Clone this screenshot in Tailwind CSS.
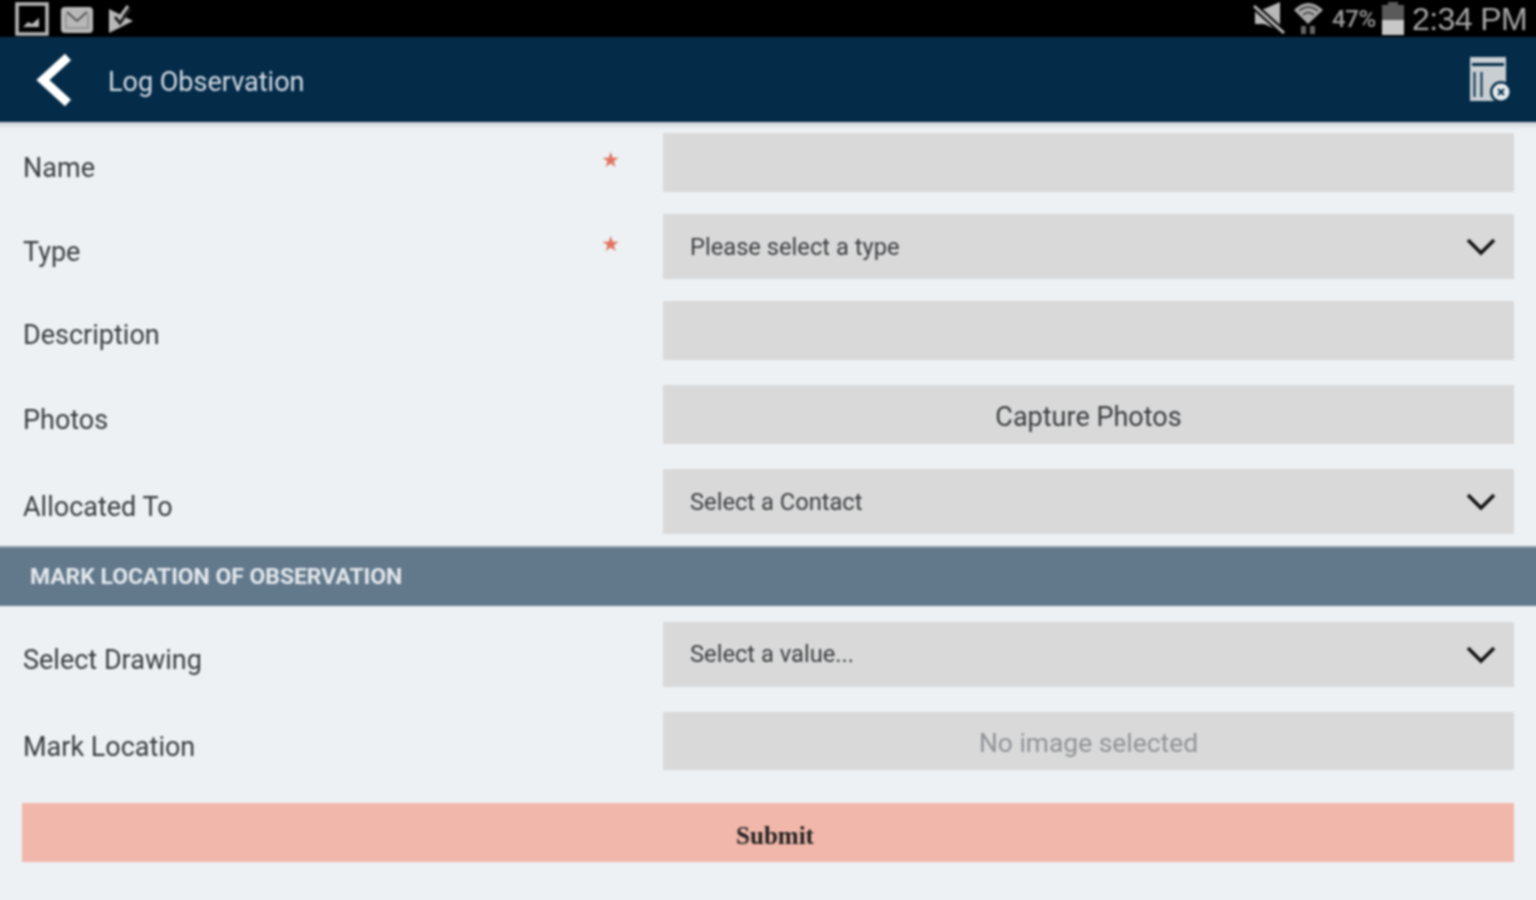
<!DOCTYPE html>
<html>
<head>
    <title>Log Observation</title>
    <script src="https://cdn.jsdelivr.net/npm/@tailwindcss/browser@4"></script>
</head>
<body class="bg-[#edf1f4] font-['Roboto',sans-serif] text-[#3a3d3f] overflow-hidden">
<!--wrapper hangs 8px past the window so the blur doesn't fade the edges-->
<div class="w-[1552px] h-[916px] -ml-[8px] -mt-[8px] bg-[#edf1f4] blur-[0.8px]">

    <!--status bar-->
    <div class="h-[45px] pt-[8px] pl-[8px] pr-[8px] bg-black flex items-center justify-between text-[#a8a8a8]">
        <div class="flex items-center">
            <svg class="ml-[15px]" width="34" height="37" viewBox="0 0 34 37" fill="none">
                <rect x="2" y="4" width="30" height="30" stroke="#b8b8b8" stroke-width="3.500"/>
                <path d="M8 27 L13 22 L17 24 L24 18 V27 Z" fill="#b8b8b8"/>
            </svg>
            <svg class="ml-[11px]" width="34" height="37" viewBox="0 0 34 37" fill="none">
                <rect x="1" y="7" width="32" height="26" rx="4" fill="#b8b8b8"/>
                <path d="M7 12 L17 21 L27 12" stroke="#555" stroke-width="2"/>
                <path d="M6 14 V28 H28 V14" stroke="#8a8a8a" stroke-width="1.500"/>
            </svg>
            <svg class="ml-[13px]" width="30" height="37" viewBox="0 0 30 37" fill="none">
                <path d="M2 9 L26 21 L2 33 Z" fill="#b8b8b8"/>
                <path d="M8 17 L13 23 L23 9" stroke="#222" stroke-width="3"/>
                <path d="M13 17 L21 6" stroke="#b8b8b8" stroke-width="3"/>
            </svg>
        </div>
        <div class="flex items-center">
            <svg width="38" height="37" viewBox="0 0 38 37" fill="none">
                <path d="M4 9 H13 L29 2 V31 L13 24 H4 Z" fill="#b8b8b8"/>
                <path d="M3 6 L33 33" stroke="#000" stroke-width="7"/>
                <path d="M3 6 L33 33" stroke="#b8b8b8" stroke-width="3"/>
            </svg>
            <svg class="ml-[3px]" width="34" height="37" viewBox="0 0 34 37" fill="none">
                <path d="M2 10 Q16 -4 31 10 L16 24 Z" fill="#a8a8a8"/>
                <path d="M7 11 Q16 3 26 11 M11 15 Q16 10 22 15" stroke="#333" stroke-width="1.500"/>
                <path d="M9 26 H14 V34 H9 Z M18 26 H23 V34 H18 Z" fill="#666"/>
            </svg>
            <span class="ml-[6px] w-[50px] text-[24px] font-medium tracking-[-0.4px] text-[#999]">47%</span>
            <div class="w-[22px] h-[33px] flex flex-col items-center">
                <div class="w-[10px] h-[3px] bg-[#5a5a5a]"></div>
                <div class="w-[22px] h-[15px] bg-[#5a5a5a]"></div>
                <div class="w-[22px] h-[15px] bg-[#c8c8c8]"></div>
            </div>
            <span class="ml-[8px] mr-[9px] text-[32px] font-['Liberation_Sans',sans-serif] tracking-[-0.6px]">2:34 PM</span>
        </div>
    </div>

    <!--header-->
    <div class="h-[85px] pl-[8px] pr-[8px] bg-[#042c49] flex items-center justify-between shadow-[0_3px_5px_rgba(0,0,0,0.15)]">
        <div class="flex items-center">
            <svg class="ml-[32px]" width="44" height="56" viewBox="0 0 44 56" fill="none">
                <path d="M36 5 L11 28 L36 51" stroke="#fff" stroke-width="9"/>
            </svg>
            <span class="ml-[32px] pt-[5px] text-[27px] text-[#d5dde6]">Log Observation</span>
        </div>
        <svg class="mr-[24px]" width="44" height="50" viewBox="0 0 44 50" fill="none">
            <rect x="2" y="2" width="36" height="44" fill="#c9ced3"/>
            <rect x="4" y="8" width="32" height="3" fill="#042c49"/>
            <path d="M6.500 17 V42 M13.500 17 V42" stroke="#042c49" stroke-width="2"/>
            <circle cx="33" cy="37" r="11" fill="#042c49"/>
            <circle cx="33" cy="37" r="8.500" fill="#e8ecef"/>
            <path d="M30 34 L36 40 M36 34 L30 40" stroke="#042c49" stroke-width="2"/>
        </svg>
    </div>

    <!--form-->
    <div class="pl-[31px]">
        <div class="flex mt-[11px]">
            <div class="w-[640px] flex justify-between text-[27px] pt-[15px] h-[59px]">
                <span>Name</span><span class="mr-[43px] -mt-[3px] text-[#e0735f] text-[21px] font-['DejaVu_Sans',sans-serif]">★</span>
            </div>
            <div class="w-[851px] h-[59px] bg-[#d9d9d9]"></div>
        </div>
        <div class="flex mt-[22px]">
            <div class="w-[640px] flex justify-between text-[27px] pt-[18px] h-[65px]">
                <span>Type</span><span class="mr-[43px] -mt-[3px] text-[#e0735f] text-[21px] font-['DejaVu_Sans',sans-serif]">★</span>
            </div>
            <div class="w-[851px] h-[65px] bg-[#d9d9d9] flex items-center justify-between pl-[27px] pr-[18px] text-[23.700px]">
                <span class="pt-[3px]">Please select a type</span>
                <svg width="30" height="18" viewBox="0 0 30 18" fill="none"><path d="M2 2 L15 15 L28 2" stroke="#111" stroke-width="3.500"/></svg>
            </div>
        </div>
        <div class="flex mt-[22px]">
            <div class="w-[640px] text-[27px] pt-[14px] h-[59px]">Description</div>
            <div class="w-[851px] h-[59px] bg-[#d9d9d9]"></div>
        </div>
        <div class="flex mt-[25px]">
            <div class="w-[640px] text-[27px] pt-[15px] h-[59px]">Photos</div>
            <div class="w-[851px] h-[59px] bg-[#d9d9d9] flex items-center justify-center text-[27px] pt-[5px]">Capture Photos</div>
        </div>
        <div class="flex mt-[25px]">
            <div class="w-[640px] text-[27px] pt-[18px] h-[65px]">Allocated To</div>
            <div class="w-[851px] h-[65px] bg-[#d9d9d9] flex items-center justify-between pl-[27px] pr-[18px] text-[23.700px]">
                <span class="pt-[3px]">Select a Contact</span>
                <svg width="30" height="18" viewBox="0 0 30 18" fill="none"><path d="M2 2 L15 15 L28 2" stroke="#111" stroke-width="3.500"/></svg>
            </div>
        </div>
    </div>

    <!--section band-->
    <div class="mt-[12px] h-[60px] bg-[#62798c] border-t-2 border-[#8b9aa6] flex items-center pl-[38px] text-[22.900px] font-bold text-[#e3e8ec]">MARK LOCATION OF OBSERVATION</div>

    <div class="pl-[31px]">
        <div class="flex mt-[16px]">
            <div class="w-[640px] text-[27px] pt-[18px] h-[65px]">Select Drawing</div>
            <div class="w-[851px] h-[65px] bg-[#d9d9d9] flex items-center justify-between pl-[27px] pr-[18px] text-[23.700px]">
                <span>Select a value...</span>
                <svg width="30" height="18" viewBox="0 0 30 18" fill="none"><path d="M2 2 L15 15 L28 2" stroke="#111" stroke-width="3.500"/></svg>
            </div>
        </div>
        <div class="flex mt-[25px]">
            <div class="w-[640px] text-[27px] pt-[15px] h-[58px]">Mark Location</div>
            <div class="w-[851px] h-[58px] bg-[#d9d9d9] flex items-center justify-center text-[26.400px] text-[#8f9296] pt-[5px]">No image selected</div>
        </div>
        <button class="mt-[33px] -ml-px w-[1492px] h-[59px] bg-[#f2b7ab] pl-[14px] pt-[6px] text-[25px] font-bold font-['Liberation_Serif',serif] text-[#222]">Submit</button>
    </div>
</div>
</body>
</html>
